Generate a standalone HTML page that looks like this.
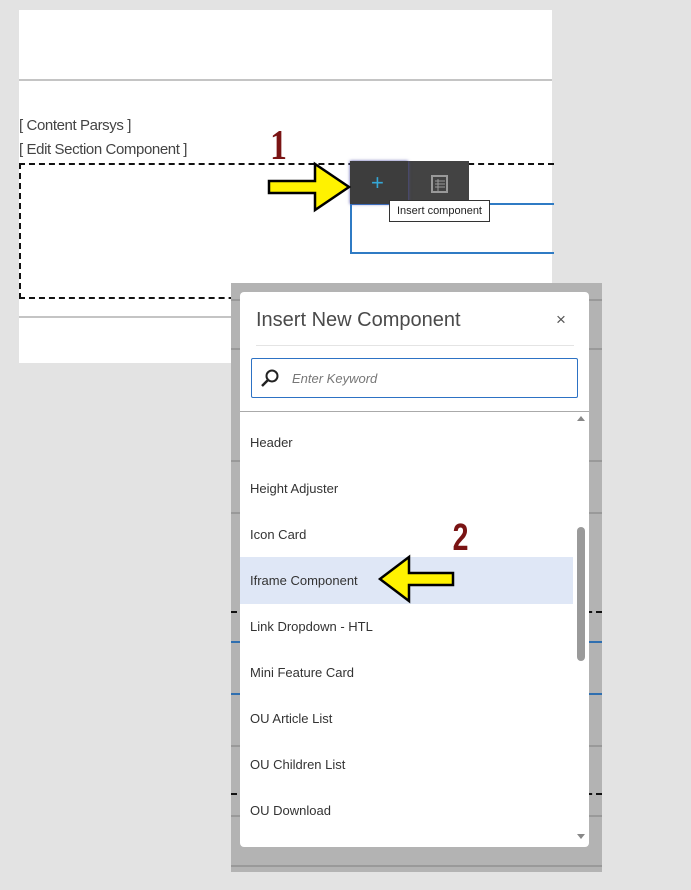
<!DOCTYPE html>
<html><head><style>
body{margin:0;width:691px;height:890px;background:#e3e3e3;position:relative;overflow:hidden;font-family:"Liberation Sans",sans-serif}
.a{position:absolute}
.it{position:absolute;left:250px;font-size:13px;color:#333}
</style></head><body>
<div class="a" style="left:19px;top:10px;width:533px;height:353px;background:#fff"></div>
<div class="a" style="left:19px;top:79px;width:533px;height:2px;background:#c4c4c4"></div>
<div class="a" style="left:19px;top:316px;width:533px;height:2px;background:#c4c4c4"></div>
<div class="a" style="left:19px;top:117px;font-size:15px;color:#444;letter-spacing:-0.4px">[ Content Parsys ]</div>
<div class="a" style="left:19px;top:141px;font-size:15px;color:#444;letter-spacing:-0.4px">[ Edit Section Component ]</div>
<div class="a" style="left:19px;top:163px;width:533px;height:132px;border:2px dashed #111;border-right:none"></div>
<div class="a" style="left:350px;top:203px;width:202px;height:47px;border:2px solid #2f7bc4;border-right:none"></div>
<div class="a" style="left:350px;top:161px;width:119px;height:43px;background:#434343"></div>
<div class="a" style="left:350px;top:161px;width:58px;height:43px;background:#3d3d3d;box-shadow:0 0 3px #55a"></div>
<div class="a" style="left:371px;top:170px;font-size:22px;color:#35a7d6">+</div>
<svg class="a" style="left:431px;top:175px" width="18" height="18"><rect x="1" y="1" width="15" height="16" fill="none" stroke="#999" stroke-width="2"/><path d="M4 6H14M4 9H14M4 12H14M7 4V16" stroke="#999"/></svg>
<div class="a" style="left:389px;top:200px;border:1px solid #333;background:#fff;font-size:11px;padding:4px 7px;color:#222">Insert component</div>
<div class="a" style="left:268px;top:122px;font-size:42px;font-weight:bold;color:#7a1414;font-family:'Liberation Serif',serif;transform:scaleX(.8)">1</div>
<svg class="a" style="left:266px;top:160px" width="88" height="54"><path d="M3 21H49V4L83 27L49 50V33H3Z" fill="#fff200" stroke="#000" stroke-width="2.5"/></svg>

<div class="a" style="left:231px;top:283px;width:371px;height:589px;background:#b3b3b3"></div>
<div class="a" style="left:231px;top:299px;width:371px;height:2px;background:#999"></div>
<div class="a" style="left:231px;top:348px;width:371px;height:2px;background:#999"></div>
<div class="a" style="left:231px;top:460px;width:371px;height:2px;background:#999"></div>
<div class="a" style="left:231px;top:512px;width:371px;height:2px;background:#999"></div>
<div class="a" style="left:231px;top:611px;width:371px;height:2px;border-top:2px dashed #111"></div>
<div class="a" style="left:231px;top:641px;width:371px;height:2px;background:#2f6fb0"></div>
<div class="a" style="left:231px;top:693px;width:371px;height:2px;background:#2f6fb0"></div>
<div class="a" style="left:231px;top:745px;width:371px;height:2px;background:#999"></div>
<div class="a" style="left:231px;top:793px;width:371px;height:2px;border-top:2px dashed #111"></div>
<div class="a" style="left:231px;top:815px;width:371px;height:2px;background:#999"></div>
<div class="a" style="left:231px;top:865px;width:371px;height:2px;background:#999"></div>
<div class="a" style="left:240px;top:292px;width:349px;height:555px;background:#fff;border-radius:4px"></div>
<div class="a" style="left:256px;top:309px;font-size:20px;color:#4a4a4a">Insert New Component</div>
<div class="a" style="left:556px;top:310px;font-size:17px;color:#555">×</div>
<div class="a" style="left:256px;top:345px;width:318px;height:1px;background:#e4e4e4"></div>
<div class="a" style="left:251px;top:358px;width:325px;height:38px;border:1px solid #2d72c4;border-radius:2px"></div>
<svg class="a" style="left:260px;top:368px" width="20" height="20"><circle cx="12" cy="8" r="5.5" fill="none" stroke="#222" stroke-width="2"/><path d="M8 12L2 18" stroke="#222" stroke-width="2.5"/></svg>
<div class="a" style="left:292px;top:371px;font-size:13px;font-style:italic;color:#777">Enter Keyword</div>
<div class="a" style="left:240px;top:411px;width:349px;height:1px;background:#aaa"></div>
<div class="a" style="left:240px;top:557px;width:333px;height:47px;background:#dfe7f6"></div>
<div class="it" style="top:435px">Header</div>
<div class="it" style="top:481px">Height Adjuster</div>
<div class="it" style="top:527px">Icon Card</div>
<div class="it" style="top:573px">Iframe Component</div>
<div class="it" style="top:619px">Link Dropdown - HTL</div>
<div class="it" style="top:665px">Mini Feature Card</div>
<div class="it" style="top:711px">OU Article List</div>
<div class="it" style="top:757px">OU Children List</div>
<div class="it" style="top:803px">OU Download</div>
<div class="a" style="left:577px;top:527px;width:8px;height:134px;background:#9a9a9a;border-radius:4px"></div>
<div class="a" style="left:577px;top:416px;width:0;height:0;border:4px solid transparent;border-bottom:5px solid #888;border-top:none"></div>
<div class="a" style="left:577px;top:834px;width:0;height:0;border:4px solid transparent;border-top:5px solid #888;border-bottom:none"></div>
<div class="a" style="left:450px;top:517px;font-size:38px;font-weight:bold;color:#7a1414;transform:scaleX(.75)">2</div>
<svg class="a" style="left:376px;top:553px" width="80" height="52"><path d="M77 20H33V4L4 26L33 48V32H77Z" fill="#fff200" stroke="#000" stroke-width="2.5"/></svg>
</body></html>
